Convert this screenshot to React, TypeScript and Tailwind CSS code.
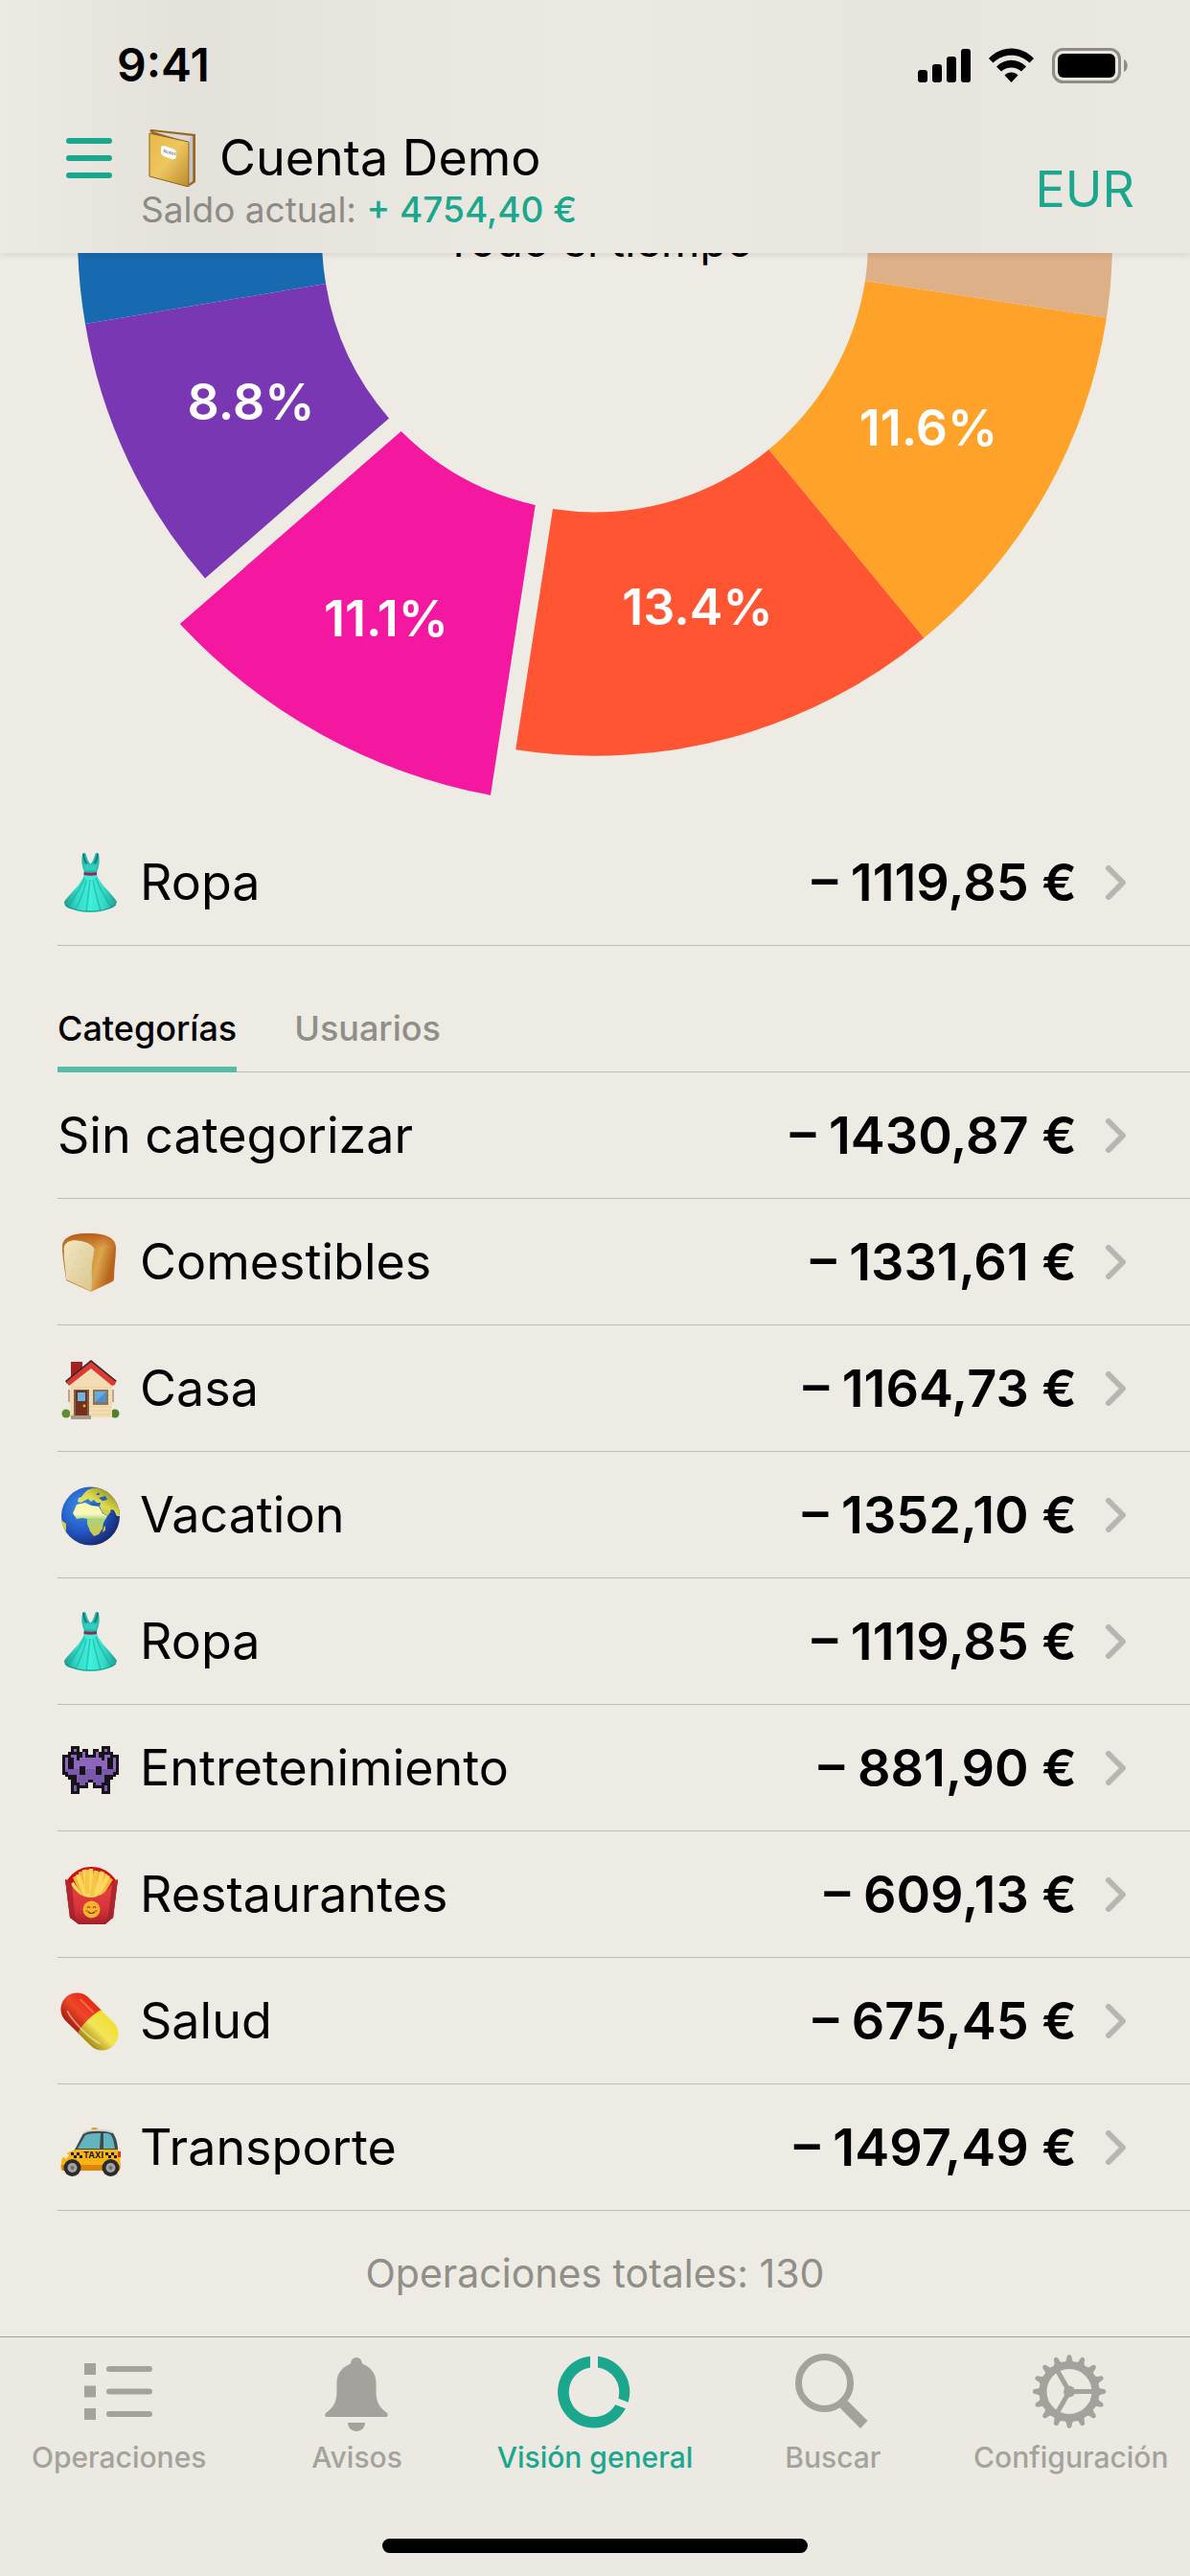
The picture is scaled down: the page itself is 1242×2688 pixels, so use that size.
import { useState, type FC, type ReactNode } from 'react';

type TabKey = 'categories' | 'users';

interface Category {
  name: string;
  amount: string;
  icon?: ReactNode;
}

const INVADER = [
  '...###....',
  '...#P#.##.',
  '..#####P#.',
  '###PP##P##',
  '#P##P#PPPP',
  '#P##PPPPPP',
  '#P##PPPPPP',
  '#P##PP##PP',
  '#PPPPP##PP',
  '##PPPP##PP',
  '.####PPPPP',
  '..###PPPPP',
  '...##PPPP#',
  '...###PP#.',
  '...#P####.',
  '...#P#....',
  '...###....',
];

const EmojiBox: FC<{ children: ReactNode }> = ({ children }) => (
  <svg viewBox="0 0 66 66" className="mr-5 size-[66px] shrink-0" aria-hidden="true">
    {children}
  </svg>
);

const DressIcon: FC<{ id: string }> = ({ id }) => (
  <EmojiBox>
    <defs>
      <linearGradient id={id} x1="0" x2="1">
        <stop offset="0" stopColor="#1f9c90" />
        <stop offset="0.25" stopColor="#33dcc8" />
        <stop offset="0.5" stopColor="#3ff0da" />
        <stop offset="0.75" stopColor="#33dcc8" />
        <stop offset="1" stopColor="#1f9c90" />
      </linearGradient>
    </defs>
    <path d="M28 24 L41 24 C43 34 56 43 62 53 C61 56 60 57 59 58 C57 60 54 60 52 61 C47 63 41 64 34 64 C27 64 21 63 17 61 C14 60 11 60 9 58 C8 57 7 55 7 53 C14 43 26 34 28 24 Z" fill={`url(#${id})`} />
    <path d="M26.500 2 C25 7 25 12 26 15 C26 18 28 20 28 23 L41 23 C41 20 43 18 43 15 C44 12 44 7 42.500 2 L40 2 C38 6 38 10 34.500 13.500 C31 10 31 6 29 2 Z" fill="#27b9ab" />
    <path d="M27 3 C27 7 29 10 30 13 M42 3 C42 7 40 10 39 13" fill="none" stroke="#167a74" strokeWidth="2" />
    <path d="M27 14 C30 15 32 14 34.500 14 C37 14 39 15 42 14 L40 20 H29 Z" fill="#2fd0bf" />
    <path d="M27.500 22 C32 23 37 23 41 22 V25 C37 26 32 26 27.500 25 Z" fill="#8f2a50" />
    <path d="M28 28 C25 40 17 47 12 57 M30 30 C28 42 24 51 19 61 M34 30 C33 42 31 52 30 63 M37 30 C39 42 42 52 45 62 M40 28 C44 40 50 49 56 58" fill="none" stroke="#1b9c92" strokeWidth="1.500" opacity="0.500" />
    <path d="M8 56 C13 60 23 63 34 63 C45 63 55 60 61 56" fill="none" stroke="#1a8f86" strokeWidth="1.500" opacity="0.700" />
  </EmojiBox>
);

const BreadIcon: FC = () => (
  <EmojiBox>
    <defs>
      <linearGradient id="crust" x1="0" x2="1" y1="0" y2="0.300">
        <stop offset="0" stopColor="#c06a22" />
        <stop offset="0.550" stopColor="#c98a3a" />
        <stop offset="0.750" stopColor="#dca64d" />
        <stop offset="1" stopColor="#b8641c" />
      </linearGradient>
      <linearGradient id="crustTop" y1="0" y2="1" x1="0" x2="0">
        <stop offset="0" stopColor="#b9591a" />
        <stop offset="1" stopColor="#c97a30" stopOpacity="0" />
      </linearGradient>
      <linearGradient id="crumb" x1="0" x2="1" y1="0" y2="1">
        <stop offset="0" stopColor="#f2e6c2" />
        <stop offset="1" stopColor="#d9c78f" />
      </linearGradient>
    </defs>
    <path d="M5 17 C5 8 14 3 31 3 C49 3 61 7 61 18 C61 28 59 38 59 50 C59 52 58 53 56 54 L35 64 L9 52 C8 42 5 28 5 17 Z" fill="url(#crust)" />
    <path d="M5 17 C5 8 14 3 31 3 C49 3 61 7 61 18 L52 15 L38 20 C30 9 14 8 7 17 Z" fill="url(#crustTop)" />
    <path d="M7 20 C7 12 14 10 21 11 C29 12 38 15 38 21 C38 27 36 31 36 37 C35 46 37 54 35 63 L9 51 C9 41 6 29 7 20 Z" fill="url(#crumb)" />
    <path d="M7 20 C7 12 14 10 21 11 C29 12 38 15 38 21" fill="none" stroke="#f7e5b7" strokeWidth="1" />
    <path d="M14 25h1M23 22h1M29 29h1M18 34h1M26 40h1M15 43h1M30 50h1M23 51h1M31 20h1" stroke="#c9b67e" strokeWidth="1" />
  </EmojiBox>
);

const HouseIcon: FC = () => (
  <EmojiBox>
    <circle cx="9" cy="59" r="4.500" fill="#5d8f35" />
    <circle cx="60" cy="59" r="4.500" fill="#4f812c" />
    <path d="M14 5 H26 V18 L14 28 Z" fill="#a5231f" />
    <path d="M11 34h3v13h-3zM56 34h3v13h-3z" fill="#b9a88f" />
    <path d="M13 27 L35 8 L57 27 V63 H13 Z" fill="#f4ddb4" />
    <path d="M14 32h42M14 36h42M14 40h42M14 44h42M14 48h42M14 52h42M14 56h42M14 60h42" stroke="#e4c795" strokeWidth="0.700" />
    <path d="M8 25 L35 3 L62 25 L59 27 L35 8 L10 28 Z" fill="#2b2727" />
    <path d="M9 26 L35 5 L61 26 L60 29 L57 30 L35 12 L12 30 Z" fill="#dd3a33" />
    <path d="M17 34h16v27H17z" fill="#7b6047" />
    <path d="M19 35h12v26H19z" fill="#74301c" />
    <path d="M21 37h8v9h-8z" fill="#68b6e8" />
    <circle cx="28" cy="51" r="1.400" fill="#f1b92d" />
    <path d="M37 34h16v16H37z" fill="#8d7357" />
    <path d="M39 36h12v11H39z" fill="#65ace0" />
    <path d="M39 47 L51 36 V47 Z" fill="#4b91cd" />
    <path d="M14 61h21v4H14z" fill="#a39a8b" />
  </EmojiBox>
);

const GlobeIcon: FC = () => (
  <EmojiBox>
    <defs>
      <radialGradient id="ocean" cx="0.350" cy="0.350" r="0.700">
        <stop offset="0" stopColor="#3b90e8" />
        <stop offset="0.600" stopColor="#2357c4" />
        <stop offset="1" stopColor="#18286f" />
      </radialGradient>
      <linearGradient id="land" x1="0" x2="1" y1="1" y2="0">
        <stop offset="0" stopColor="#eef3a2" />
        <stop offset="0.500" stopColor="#dbd94a" />
        <stop offset="1" stopColor="#6d6d12" />
      </linearGradient>
      <linearGradient id="africa" x1="0" x2="0" y1="0" y2="1">
        <stop offset="0" stopColor="#fbf9a6" />
        <stop offset="0.350" stopColor="#f6f8bd" />
        <stop offset="0.500" stopColor="#a9d37b" />
        <stop offset="1" stopColor="#d9c250" />
      </linearGradient>
      <clipPath id="globeClip">
        <circle cx="34.500" cy="34" r="30.500" />
      </clipPath>
    </defs>
    <circle cx="34.500" cy="34" r="30.500" fill="url(#ocean)" />
    <g clipPath="url(#globeClip)">
      <path d="M25 14 L28 10 L31 7 L36 5 L43 4 L55 9 L63 20 L66 34 L62 34 L59 28 L56 27 L53 32 L47 30 L44 24 L45 20 L41 20 L38 17 L35 19 L32 16 L28 18 L24 20 L21 19 L22 15 Z" fill="url(#land)" />
      <path d="M43 15 L50 13 L52 17 L47 18 Z M34 20 L40 21 L44 22 L38 24 Z M40 12 L43 9 L44 12 Z" fill="#2459c2" />
      <path d="M20 22 L29 20 L35 23 L43 24 L47 31 L52 34 L48 41 L47 47 L43 53 L38 55 L34 50 L31 42 L31 37 L26 36 L20 37 L16 31 Z" fill="url(#africa)" />
      <path d="M46 25 L51 27 L56 29 L52 34 L48 31 Z" fill="#d3d048" />
      <path d="M48 46 L50 44 L50 49 L47 51 Z" fill="#c6bc3a" />
      <path d="M4 38 L9 42 L9 48 L7 53 L3 47 Z" fill="#d8d437" />
    </g>
  </EmojiBox>
);

const InvaderIcon: FC = () => (
  <EmojiBox>
    <g transform="translate(5 10) scale(2.950)" shapeRendering="crispEdges">
      {INVADER.map((half, y) =>
        (half + half.split('').reverse().join('')).split('').map((cell, x) =>
          cell === '.' ? null : (
            <rect key={`${x}-${y}`} x={x} y={y} width="1" height="1" fill={cell === '#' ? '#161319' : y < 8 ? '#8c66bd' : '#7957ab'} />
          ),
        ),
      )}
    </g>
  </EmojiBox>
);

const FriesIcon: FC = () => (
  <EmojiBox>
    <defs>
      <linearGradient id="carton" x1="0" x2="0" y1="0" y2="1">
        <stop offset="0" stopColor="#f0433c" />
        <stop offset="0.650" stopColor="#d5343a" />
        <stop offset="1" stopColor="#a51f28" />
      </linearGradient>
    </defs>
    <path d="M10 18 C17 8 26 4 35 4 C45 4 54 8 61 18 L50 38 H20 Z" fill="#cf0f12" />
    <path d="M8 17 L15 20 L22 62 L13 57 Z M63 17 L57 20 L49 62 L58 57 Z" fill="#a41c27" />
    <g strokeLinecap="butt" strokeWidth="4.500" fill="none">
      <path d="M18 14 L28 36 M24 9 L29 34 M43 9 L38 36 M50 11 L42 34 M56 16 L45 34" stroke="#f2b93c" />
      <path d="M15 21 L24 35 M28 7 L33 36 M35 6 L35 36 M47 9 L39 36 M53 13 L43 32 M21 12 L30 36" stroke="#ffd75f" />
      <path d="M31 7 L31 32 M40 8 L36 34" stroke="#f6c648" />
    </g>
    <path d="M8 17 C16 20 17 35 35 36 C53 35 55 20 63 17 L61 32 L58 57 L50 64 H22 L13 57 Z" fill="url(#carton)" />
    <path d="M8 17 L15 22 L18 55 L22 64 L13 57 Z M63 17 L57 22 L53 55 L49 64 L58 57 Z" fill="#98202a" opacity="0.700" />
    <circle cx="35.500" cy="48.500" r="9" fill="#f9b52a" />
    <path d="M31 47 q1.500 -3 3 0 M37 47 q1.500 -3 3 0 M31 50 q4.500 5 9 0" fill="none" stroke="#784514" strokeWidth="1.200" />
    <path d="M29 50h3M39 50h3" stroke="#ef7b3a" strokeWidth="2" />
  </EmojiBox>
);

const PillIcon: FC = () => (
  <EmojiBox>
    <defs>
      <linearGradient id="pillRed" x1="0" x2="0" y1="0" y2="1">
        <stop offset="0" stopColor="#e32a12" />
        <stop offset="0.500" stopColor="#f0472a" />
        <stop offset="1" stopColor="#a9200c" />
      </linearGradient>
      <linearGradient id="pillYellow" x1="0" x2="0" y1="0" y2="1">
        <stop offset="0" stopColor="#f1e02a" />
        <stop offset="0.500" stopColor="#f3e45a" />
        <stop offset="1" stopColor="#a88b10" />
      </linearGradient>
    </defs>
    <g transform="rotate(45 33.500 33.500)">
      <path d="M34 16.500 H15 A17 17 0 0 0 15 50.500 H34 Z" fill="url(#pillRed)" />
      <path d="M33 16.500 H52 A17 17 0 0 1 52 50.500 H33 C30 40 30 27 33 16.500 Z" fill="url(#pillYellow)" />
      <path d="M9 42 C20 46 45 46 58 42" stroke="#fff" strokeWidth="1.500" opacity="0.500" fill="none" />
      <path d="M10 24 H30" stroke="#ff8d70" strokeWidth="2" opacity="0.600" />
    </g>
  </EmojiBox>
);

const TaxiIcon: FC = () => (
  <EmojiBox>
    <path d="M35 15 L36 12 H41 L42 15 Z" fill="#e5a426" />
    <path d="M17 37 L27 18 C30 15 52 14 58 18 C62 24 63 30 63 37 Z" fill="#3f4a4e" />
    <path d="M27 18 C31 14 50 14 57 17" fill="none" stroke="#d8d5c8" strokeWidth="2" />
    <path d="M21 34 L29 20 C34 18 40 18 45 18 L44 34 Z M48 18 C52 18 54 18 56 20 C59 25 59 30 60 34 L48 34 Z" fill="#62b4bf" />
    <path d="M4 49 C4 43 9 37 20 35 H63 C66 38 65 45 66 52 C66 56 65 57 62 57 H6 C3 57 3 54 4 49 Z" fill="#f9b411" />
    <path d="M4 51 H65 V56 Q64 58 60 57 H5 Z" fill="#dd8508" />
    <path d="M14 38h3v3h-3zM17 41h3v3h-3zM20 38h3v3h-3zM23 41h3v3h-3zM50 38h3v3h-3zM53 41h3v3h-3zM56 38h3v3h-3zM59 41h3v3h-3z" fill="#1c1a17" />
    <text x="37.500" y="43.500" textAnchor="middle" fontSize="9" fontWeight="700" fill="#1c1a17">TAXI</text>
    <path d="M6 42 l4 -3 l2 2 l-3 4 z" fill="#f5f0da" />
    <path d="M63 37h3v6h-3z" fill="#d83525" />
    <circle cx="15.500" cy="54" r="9" fill="#2b2b2d" />
    <circle cx="55.500" cy="54" r="9" fill="#2b2b2d" />
    <circle cx="15.500" cy="54" r="5" fill="#a3a3a3" />
    <circle cx="55.500" cy="54" r="5" fill="#a3a3a3" />
    <circle cx="15.500" cy="54" r="2" fill="#6c6c6c" />
    <circle cx="55.500" cy="54" r="2" fill="#6c6c6c" />
  </EmojiBox>
);

const NotebookIcon: FC = () => (
  <svg viewBox="0 0 50 60" className="ml-2 mr-6 h-[60px] w-[50px]" aria-hidden="true">
    <defs>
      <linearGradient id="cover" x1="0" x2="1" y1="0" y2="1">
        <stop offset="0" stopColor="#e8b94a" />
        <stop offset="0.500" stopColor="#edc65f" />
        <stop offset="1" stopColor="#b98b2a" />
      </linearGradient>
    </defs>
    <path d="M1 1 L3 0 L49 5 V55 L43 59 Z" fill="#9a671f" />
    <path d="M4 2 L46 7 V54 L42 57 L40 13 Z" fill="#d9d9da" />
    <path d="M44 8 V55 M46 7 V54" stroke="#a4a4a8" strokeWidth="0.800" />
    <path d="M1 4 L42 13 V60 L1 49 Z" fill="url(#cover)" stroke="#8f5f1c" strokeWidth="1" />
    <path d="M16 17 L25 20 Q29 21 29 25 V29 Q28 32 24 31 L16 28 Q13 27 13 23 V19 Q13 17 16 17 Z" fill="#fff" />
    <text x="15" y="24" fontSize="5" transform="rotate(14 15 24)" fill="#555">Notes</text>
  </svg>
);

const CATEGORIES: Category[] = [
  { name: 'Sin categorizar', amount: '– 1430,87 €' },
  { name: 'Comestibles', amount: '– 1331,61 €', icon: <BreadIcon /> },
  { name: 'Casa', amount: '– 1164,73 €', icon: <HouseIcon /> },
  { name: 'Vacation', amount: '– 1352,10 €', icon: <GlobeIcon /> },
  { name: 'Ropa', amount: '– 1119,85 €', icon: <DressIcon id="dressRow" /> },
  { name: 'Entretenimiento', amount: '– 881,90 €', icon: <InvaderIcon /> },
  { name: 'Restaurantes', amount: '– 609,13 €', icon: <FriesIcon /> },
  { name: 'Salud', amount: '– 675,45 €', icon: <PillIcon /> },
  { name: 'Transporte', amount: '– 1497,49 €', icon: <TaxiIcon /> },
];

const StatusIcons: FC = () => (
  <svg viewBox="958 46 220 42" className="h-[42px] w-[220px]" aria-hidden="true">
    <rect x="958" y="72" width="10" height="13" rx="3" />
    <rect x="973" y="66" width="10" height="19" rx="3" />
    <rect x="988" y="58" width="10" height="27" rx="3" />
    <rect x="1003" y="50" width="10" height="35" rx="3" />
    <path d="M1032 60 C1045 46 1066 46 1079 60 L1074.500 64.500 C1064 54 1047 54 1036.500 64.500 Z" />
    <path d="M1040 68.500 C1049 59.500 1062 59.500 1071 68.500 L1066 73.500 C1060 68 1051 68 1045 73.500 Z" />
    <path d="M1048.500 77.500 C1052 73.500 1059 73.500 1062.500 77.500 L1055.500 85 Z" />
    <rect x="1099.500" y="50.500" width="69" height="34" rx="10" fill="none" stroke="#8e8c87" strokeWidth="3" />
    <rect x="1104" y="55" width="60" height="25" rx="6" />
    <path d="M1173 61 C1178 63 1178 72 1173 74 Z" fill="#8e8c87" />
  </svg>
);

const Header: FC = () => (
  <header className="relative z-10 bg-[linear-gradient(90deg,#edeae3_0%,#e4e1da_16%,#e9e6df_32%,#ece9e2_50%,#e8e5de_76%,#ebe8e1_100%)] shadow-[0_1px_8px_rgba(0,0,0,0.12)]">
    <div className="flex h-[132px] items-center justify-between pl-[122px] pr-16 pt-1">
      <span className="text-[48px] font-semibold">9:41</span>
      <StatusIcons />
    </div>
    <div className="flex h-[132px] items-center pl-[69px] pr-[58px]">
      <button aria-label="Menú" className="flex h-[66px] w-[78px] shrink-0 items-center self-start">
        <svg viewBox="0 0 48 42" className="h-[42px] w-12">
          <path d="M3 3H45M3 21H45M3 39H45" stroke="#1aa78e" strokeWidth="6" strokeLinecap="round" />
        </svg>
      </button>
      <div className="flex-1 self-start whitespace-nowrap">
        <h1 className="flex h-[66px] items-center text-[52px]">
          <NotebookIcon />
          Cuenta Demo
        </h1>
        <p className="text-[37px] leading-[42px] text-[#8c8b86]">
          Saldo actual: <span className="font-medium text-[#1aa78e]">+ 4754,40 €</span>
        </p>
      </div>
      <button className="text-[52px] text-[#1aa78e]">EUR</button>
    </div>
  </header>
);

const DonutChart: FC = () => (
  <svg viewBox="0 264 1242 591" className="block w-full" role="img" aria-label="Gastos por categoría">
    <path d="M81 249 A540 540 0 0 0 89 338 L340 296 A285 285 0 0 1 336 249 Z" fill="#176ab0" />
    <path d="M89 338 A540 540 0 0 0 214 603.500 L406 436.400 A285 285 0 0 1 340 296 Z" fill="#7a37b3" />
    <path d="M187.800 651 A591 591 0 0 0 512 829.700 L558.700 527 A285 285 0 0 1 418.700 450 Z" fill="#f3189f" />
    <path d="M538.200 782.300 A540 540 0 0 0 964.500 665.500 L802.500 469 A285 285 0 0 1 577 531 Z" fill="#ff5533" />
    <path d="M964.500 665.500 A540 540 0 0 0 1154.900 331.500 L903 293 A285 285 0 0 1 802.500 469 Z" fill="#ffa229" />
    <path d="M1154.900 331.500 A540 540 0 0 0 1161 249 L906 249 A285 285 0 0 1 903 293 Z" fill="#ddb087" />
    <text x="625" y="268" textAnchor="middle" fontSize="46">Todo el tiempo</text>
    <g fill="#fff" fontSize="52" fontWeight="600" textAnchor="middle">
      <text x="262" y="438">8.8%</text>
      <text x="403" y="664">11.1%</text>
      <text x="728" y="652">13.4%</text>
      <text x="969" y="465">11.6%</text>
    </g>
  </svg>
);

const CategoryRow: FC<{ category: Category }> = ({ category }) => (
  <button className="ml-[60px] flex h-[132px] items-center self-stretch border-b border-[#bebcb7] pr-[66px] text-[52px]">
    {category.icon}
    <span className="flex-1 text-left">{category.name}</span>
    <span className="mr-[30px] text-[54px] font-semibold">{category.amount}</span>
    <svg viewBox="0 0 22 36" className="h-9 w-[22px]" fill="none" stroke="#b8b6b2" strokeWidth="6" strokeLinecap="round" strokeLinejoin="round" aria-hidden="true">
      <path d="M3 3 L18 18 L3 33" />
    </svg>
  </button>
);

const ListIcon = (
  <>
    <path d="M4 11h12v12H4zM4 34.500h12v12H4zM4 58h12v12H4z" />
    <path d="M30 17H72M30 40.500H72M30 64H72" stroke="currentColor" strokeWidth="6" strokeLinecap="round" />
  </>
);

const BellIcon = (
  <>
    <path d="M39 5 C42.500 5 45 8 45 11.500 C54 15 59.500 22 59.500 31 V41 C59.500 52 64 58 70 62 C73 65 72 67 69 67 H9 C6 67 5 65 8 62 C14 58 18.500 52 18.500 41 V31 C18.500 22 24 15 33 11.500 C33 8 35.500 5 39 5 Z" />
    <path d="M30 73 H48 C48 78 44 82 39 82 C34 82 30 78 30 73 Z" />
  </>
);

const OverviewIcon = (
  <>
    <path d="M35 3.700 A37.500 37.500 0 1 0 71.900 58.300 L61.200 54.300 A26 26 0 1 1 35 15.400 Z" />
    <path d="M43 3.700 A37.500 37.500 0 0 1 74.700 51.700 L64.400 47.700 A26 26 0 0 0 43 15.400 Z" />
  </>
);

const SearchIcon = (
  <>
    <circle cx="31.500" cy="31.500" r="27" fill="none" stroke="currentColor" strokeWidth="7" />
    <path d="M47.500 57.500 L55.500 50 L76.500 71 L69 79 Z" />
  </>
);

const GearIcon = (
  <g transform="translate(-2 0.500)">
    {Array.from({ length: 16 }, (_, i) => (
      <path key={i} d="M34 11 Q37.500 8 37.500 3.500 Q40 -0.500 42.500 3.500 Q42.500 8 46 11 Z" transform={`rotate(${i * 22.5} 40 40)`} />
    ))}
    <circle cx="40" cy="40" r="27.500" fill="none" stroke="currentColor" strokeWidth="8" />
    <circle cx="40" cy="40" r="6" />
    <path d="M40 40 H65 M40 40 L27.500 18 M40 40 L27.500 62" stroke="currentColor" strokeWidth="5" />
  </g>
);

const NAV_ITEMS = [
  { label: 'Operaciones', icon: ListIcon },
  { label: 'Avisos', icon: BellIcon },
  { label: 'Visión general', icon: OverviewIcon, active: true },
  { label: 'Buscar', icon: SearchIcon },
  { label: 'Configuración', icon: GearIcon },
];

const TabBar: FC = () => (
  <footer className="border-t border-[#a3a19d] bg-[#ece9e2]">
    <nav className="grid grid-cols-5">
      {NAV_ITEMS.map((item) => (
        <a
          key={item.label}
          href="#"
          aria-current={item.active ? 'page' : undefined}
          className={`flex flex-col items-center whitespace-nowrap pt-4 text-[30px] font-medium leading-9 ${item.active ? 'text-[#1aa78e]' : 'text-[#a4a29d]'}`}
        >
          <svg viewBox="0 0 80 84" className="mb-[7px] h-[84px] w-20" fill="currentColor" aria-hidden="true">
            {item.icon}
          </svg>
          {item.label}
        </a>
      ))}
    </nav>
    <div className="mx-auto mb-6 mt-[67px] h-[15px] w-[444px] rounded-full bg-black" />
  </footer>
);

const App: FC = () => {
  const [tab, setTab] = useState<TabKey>('categories');

  const tabClass = (key: TabKey) =>
    `-mb-px flex items-end border-b-[6px] pb-4 leading-[48px] font-medium ${
      tab === key ? 'border-[#55bca8] text-black' : 'border-transparent text-[#8f8e89]'
    }`;

  return (
    <div className="flex min-h-screen flex-col bg-[#eeebe4] font-[Inter,'Liberation_Sans',sans-serif] text-black">
      <Header />
      <main className="flex flex-1 flex-col">
        <DonutChart />
        <CategoryRow category={{ name: 'Ropa', amount: '– 1119,85 €', icon: <DressIcon id="dressSelected" /> }} />

        <div role="tablist" className="ml-[60px] flex h-[132px] items-end gap-[60px] border-b border-[#bebcb7] text-[36px]">
          <button role="tab" aria-selected={tab === 'categories'} onClick={() => setTab('categories')} className={tabClass('categories')}>
            Categorías
          </button>
          <button role="tab" aria-selected={tab === 'users'} onClick={() => setTab('users')} className={tabClass('users')}>
            Usuarios
          </button>
        </div>

        {CATEGORIES.map((category) => (
          <CategoryRow key={category.name} category={category} />
        ))}

        <p className="flex flex-1 items-center justify-center text-[41px] text-[#8f8e89]">Operaciones totales: 130</p>
      </main>
      <TabBar />
    </div>
  );
};

export default App;
